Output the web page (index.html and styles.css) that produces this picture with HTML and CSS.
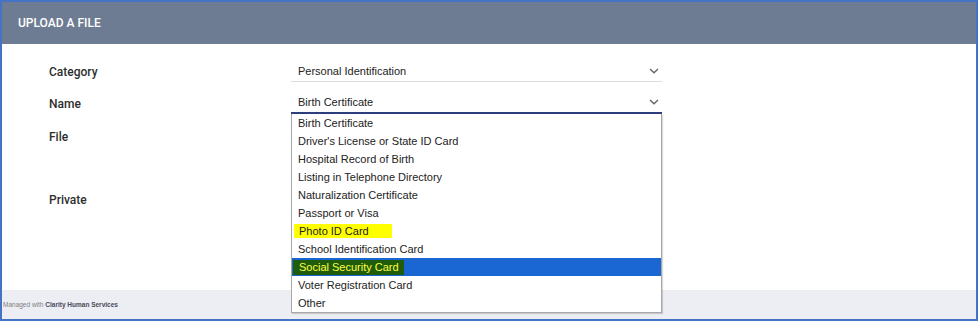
FILE: index.html
```html
<!DOCTYPE html>
<html>
    <head>
        <title>Upload a File</title>
        <link rel="stylesheet" href="styles.css">
    </head>

    <body>
        <div class="frame">
            <div class="header">UPLOAD A FILE</div>
            <div class="form">
                <div class="row row-short">
                    <div class="label">Category</div>
                    <div class="select">
                        <span>Personal Identification</span>
                        <svg class="chevron" width="12" height="8" viewBox="0 0 12 8"><path d="M2 2 L6 5.8 L10 2" fill="none" stroke="#666" stroke-width="1.4"/></svg>
                    </div>
                </div>
                <div class="row row-short">
                    <div class="label">Name</div>
                    <div class="select select-open">
                        <span>Birth Certificate</span>
                        <svg class="chevron" width="12" height="8" viewBox="0 0 12 8"><path d="M2 2 L6 5.8 L10 2" fill="none" stroke="#666" stroke-width="1.4"/></svg>
                        <ul class="options">
                            <li>Birth Certificate</li>
                            <li>Driver's License or State ID Card</li>
                            <li>Hospital Record of Birth</li>
                            <li>Listing in Telephone Directory</li>
                            <li>Naturalization Certificate</li>
                            <li>Passport or Visa</li>
                            <li><span class="mark-yellow">Photo ID Card</span></li>
                            <li>School Identification Card</li>
                            <li class="selected"><span class="mark-green">Social Security Card</span></li>
                            <li>Voter Registration Card</li>
                            <li>Other</li>
                        </ul>
                    </div>
                </div>
                <div class="row row-tall">
                    <div class="label">File</div>
                </div>
                <div class="row">
                    <div class="label">Private</div>
                </div>
            </div>
            <div class="footer">Managed with <b>Clarity Human Services</b></div>
        </div>
    </body>
</html>
```

FILE: styles.css
```css
html {
    height: 100%;
}
body {
    margin: 0px;
    background-color: white;
    font-family: Roboto, "Liberation Sans", sans-serif;
}
.frame {
    width: 974px;
    height: 317px;
    border: 2px solid #4472c4;
    display: flex;
    flex-flow: column nowrap;
}
.header {
    height: 42px;
    flex: none;
    background-color: #6e7c93;
    color: white;
    font-size: 12px;
    font-weight: 500;
    line-height: 42px;
    padding-left: 16px;
}
.form {
    flex: 1;
    padding: 17px 0px 0px 47px;
}
.row {
    display: flex;
    flex-flow: row nowrap;
    align-items: flex-start;
}
.row-short {
    height: 32px;
}
.row-short + .row-short {
    height: 33px;
}
.row-tall {
    height: 63px;
}
.label {
    width: 242px;
    flex: none;
    line-height: 22px;
    font-size: 12px;
    font-weight: 500;
    color: #2e2e2e;
}
.select {
    position: relative;
    height: 21px;
    margin-top: -1px;
    border-bottom: 1px solid #dcdcdc;
    display: flex;
    align-items: center;
    justify-content: space-between;
    padding: 0px 0px 0px 7px;
    box-sizing: content-box;
    width: 364px;
    font-family: "Liberation Sans", Arial, sans-serif;
    font-size: 11px;
    color: #222;
}
.chevron {
    margin-right: 2px;
}
.select-open {
    height: 20px;
    border-bottom: 2px solid #2e3d7c;
}
.options {
    position: absolute;
    top: 22px;
    left: 0px;
    width: 369px;
    margin: 0px;
    padding: 0px;
    list-style: none;
    background-color: white;
    border: 1px solid #a8a8a8;
    border-top: 0px;
    box-shadow: 1px 1px 1px rgba(0, 0, 0, 0.15);
}
.options li {
    height: 18px;
    line-height: 18px;
    padding-left: 6px;
    white-space: nowrap;
}
.options li.selected {
    background-color: #1a66d2;
    padding-left: 0px;
}
.mark-yellow {
    background-color: #ffff00;
    display: inline-block;
    line-height: 14px;
    padding: 0px 23px 0px 5px;
    margin-left: -4px;
}
.mark-green {
    background-color: #1f5c0c;
    color: #ffff40;
    display: inline-block;
    line-height: 15px;
    padding: 0px 5px 0px 6px;
    margin-left: 1px;
}
.footer {
    height: 29px;
    flex: none;
    background-color: #edeef3;
    font-family: "Liberation Sans", Arial, sans-serif;
    font-size: 6.5px;
    color: #808080;
    line-height: 29px;
    padding-left: 1px;
}
.footer b {
    color: #4a4a5a;
}
```
